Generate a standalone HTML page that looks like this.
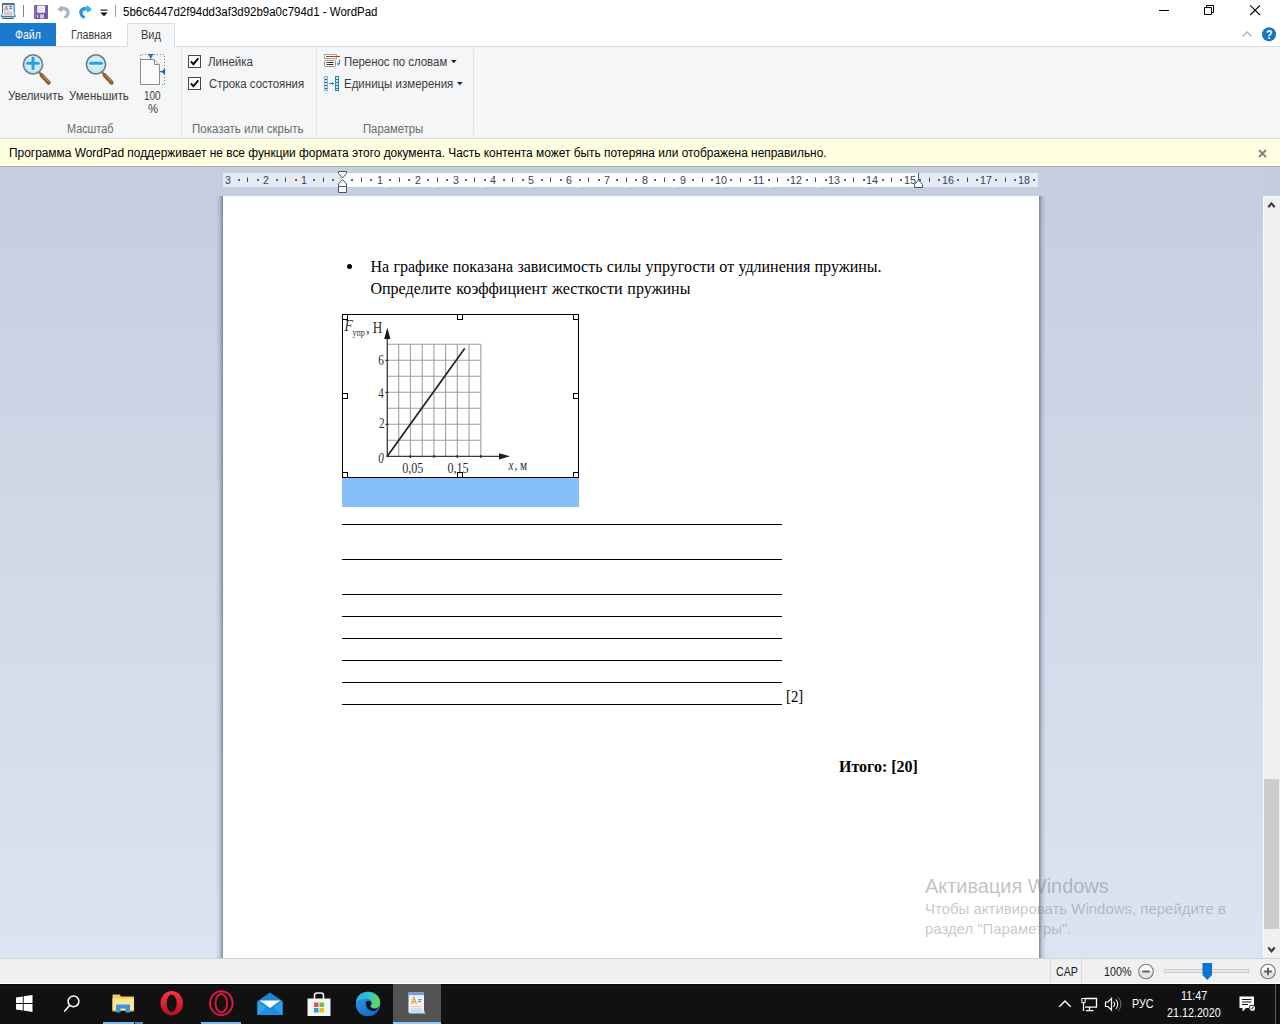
<!DOCTYPE html>
<html lang="ru">
<head>
<meta charset="utf-8">
<title>WordPad</title>
<style>
*{box-sizing:border-box;margin:0;padding:0}
html,body{width:1280px;height:1024px;overflow:hidden;background:#fff}
body{position:relative;font-family:"Liberation Sans",sans-serif;font-size:12px;color:#1e1e1e}
.abs{position:absolute}
svg{position:absolute;overflow:visible}
.t{position:absolute;white-space:nowrap;transform-origin:0 50%}
#titlebar{left:0;top:0;width:1280px;height:23px;background:#fff}
#tabrow{left:0;top:23px;width:1280px;height:24px;background:#fff;border-bottom:1px solid #dadbdc}
#filetab{left:0;top:23px;width:56px;height:23px;background:#1979ca}
#vidtab{left:127px;top:23px;width:48px;height:24px;background:#f5f6f7;border:1px solid #dadbdc;border-bottom:none}
#ribbon{left:0;top:47px;width:1280px;height:92px;background:#f5f6f7;border-bottom:1px solid #dadbd6}
.sep{position:absolute;top:49px;width:1px;height:86px;background:#e2e3e4}
.cb{position:absolute;left:188px;width:13px;height:13px;background:#fff;border:1px solid #45454c}
#info{left:0;top:139px;width:1280px;height:28px;background:#ffffe1;border-bottom:1px solid #a8aca8}
#work{left:0;top:167px;width:1263px;height:791px;background:linear-gradient(#c5cedf,#dbe5f1)}
#vscroll{left:1263px;top:196px;width:17px;height:762px;background:#f0f0f0}
#vscrolltop{left:1263px;top:167px;width:17px;height:29px;background:#c5cedf}
#thumb{left:1264px;top:779px;width:15px;height:150px;background:#cdcdcd}
#page{left:223px;top:196px;width:816px;height:762px;background:#fff}
#status{left:0;top:958px;width:1280px;height:26px;background:#f0f0f0;border-top:1px solid #d2d2d2;border-bottom:1px solid #fff}
#taskbar{left:0;top:984px;width:1280px;height:40px;background:#111;border-top:1px solid #070707}
.ul{position:absolute;left:342px;width:440px;height:1px;background:#000}
.hd{position:absolute;width:6px;height:6px;background:#fff;border:1px solid #000}
</style>
</head>
<body>
<div class="abs" id="titlebar"></div>
<div class="abs" id="tabrow"></div>
<div class="abs" id="filetab"></div>
<div class="abs" id="vidtab"></div>
<div class="abs" id="ribbon"></div>
<svg style="left:0;top:0" width="20" height="22" viewBox="0 0 20 22">
<path d="M2.500 3.600H14.200V13.500L15.300 16.300H1.300L2.500 13.500Z" fill="#dcebf8" stroke="#3f6f9f" stroke-width="1"/>
<path d="M2.500 4.100H14.200" stroke="#2f5f92" stroke-width="1.400"/>
<path d="M3.200 12.300H13.500L14.300 15.600H2.300Z" fill="#f6f9fc"/>
<path d="M4.600 10.800L6.300 5.900L8 10.800M5.200 9.200H7.400" stroke="#e39672" stroke-width="1.300" fill="none"/>
<path d="M9.400 6.400H12M9.400 8.400H12" stroke="#3f7fc4" stroke-width="1.100"/>
<path d="M4 12.900H12.500" stroke="#9aa4ae" stroke-width="0.900"/>
<path d="M3.800 14.300H12.800" stroke="#c9a9a9" stroke-width="0.900"/>
<path d="M1 16.800H15.400" stroke="#3f6f9f" stroke-width="1"/>
<path d="M2.200 18.400H13.800" stroke="#34495e" stroke-width="1"/>
</svg>
<div class="abs" style="left:23px;top:5px;width:1px;height:12px;background:#858585"></div>
<svg style="left:34px;top:5px" width="14" height="14" viewBox="0 0 14 14">
<rect x="0" y="0" width="14" height="14" rx="0.800" fill="#7a58ad"/>
<rect x="1" y="0.500" width="1" height="13" fill="#9273c2"/>
<rect x="3.200" y="0.700" width="7.900" height="7" fill="#f7f3fc"/>
<path d="M4.300 3H10M4.300 5.200H10" stroke="#d9cdea" stroke-width="0.900"/>
<rect x="2.800" y="9" width="8.600" height="5" fill="#5f4390"/>
<rect x="5.800" y="9.200" width="4.400" height="4.300" fill="#cfc6de"/>
<rect x="3.200" y="9.600" width="1.100" height="3.200" fill="#efe9f7"/>
</svg>
<svg style="left:57px;top:5px" width="14" height="14" viewBox="0 0 14 14">
<path d="M0.200 4.400L4.900 0.200V1.900C9.500 1.500 13 4 12.800 7.500C12.700 10.500 10.500 12.800 8.300 13.800L6.600 11.800C8.300 10.800 9.400 9.300 9.300 7.600C9.200 5.800 7.500 5.100 4.900 5.400V7.500Z" fill="#a7b4c9"/>
</svg>
<svg style="left:78px;top:5px" width="14" height="14" viewBox="0 0 14 14">
<path d="M13.800 4.400L9.100 0.200V1.900C4.500 1.500 1 4 1.200 7.500C1.300 10.500 3.500 12.800 5.700 13.800L7.400 11.800C5.700 10.800 4.600 9.300 4.700 7.600C4.800 5.800 6.500 5.100 9.100 5.400V7.500Z" fill="#2b96d4"/>
<path d="M13.800 4.400L9.100 0.200V1.900L7.500 2V5.500L9.100 5.400V7.500Z" fill="#38b7de"/>
</svg>
<svg style="left:100px;top:9px" width="8" height="8" viewBox="0 0 8 8">
<rect x="0.500" y="0.500" width="7" height="1.200" fill="#222"/>
<path d="M0.300 3.500h7.400l-3.700 3.800z" fill="#111"/>
</svg>
<div class="abs" style="left:115px;top:5px;width:1px;height:12px;background:#9a9a9a"></div>
<div class="t" style="left:123.0px;top:5.0px;font-size:12px;line-height:14px;height:14px;transform:scaleX(0.9567);color:#000;">5b6c6447d2f94dd3af3d92b9a0c794d1 - WordPad</div>
<svg style="left:1150px;top:0" width="130" height="23" viewBox="0 0 130 23">
<path d="M9 10.500h10" stroke="#000" stroke-width="1"/>
<path d="M54.500 7.500h7v7h-7zM56.500 7.500v-2h7v7h-2" stroke="#000" stroke-width="1" fill="none"/>
<path d="M100.200 5.300l9.800 9.700M110 5.300l-9.800 9.700" stroke="#000" stroke-width="1.100"/>
</svg>
<div class="t" style="left:15.0px;top:28.0px;font-size:12px;line-height:14px;height:14px;transform:scaleX(0.8745);color:#fff;">Файл</div>
<div class="t" style="left:70.8px;top:28.0px;font-size:12px;line-height:14px;height:14px;transform:scaleX(0.8911);color:#3c3c3c;">Главная</div>
<div class="t" style="left:141.3px;top:28.0px;font-size:12px;line-height:14px;height:14px;transform:scaleX(0.9212);color:#3c3c3c;">Вид</div>
<svg style="left:1240px;top:27px" width="40" height="16" viewBox="0 0 40 16">
<path d="M2.500 9.300l4.500-4.300 4.500 4.300" stroke="#b9b9b9" stroke-width="1.600" fill="none"/>
<circle cx="29" cy="7.300" r="7" fill="#1a74c4"/>
</svg>
<div class="t" style="left:1265.8px;top:28.0px;font-size:12px;line-height:14px;height:14px;transform:scaleX(0.8731);color:#fff;font-weight:700;">?</div>
<div class="sep" style="left:181px"></div>
<div class="sep" style="left:316px"></div>
<div class="sep" style="left:473px"></div>
<svg style="left:18.5px;top:52px" width="34" height="36" viewBox="18.5 52 34 36">
<defs><radialGradient id="lgA" cx="0.500" cy="0.450" r="0.600"><stop offset="0" stop-color="#e2f8ff"/><stop offset="1" stop-color="#b3e3f9"/></radialGradient></defs>
<path d="M38.1 71.600L41.5 75.500" stroke="#7c7468" stroke-width="2.200" stroke-linecap="round"/>
<path d="M41.1 75.200L48.1 82.700" stroke="#86582e" stroke-width="4" stroke-linecap="round"/>
<path d="M41.7 75L47.9 81.600" stroke="#b78450" stroke-width="1.400" stroke-linecap="round"/>
<circle cx="32.5" cy="64.400" r="9.600" fill="url(#lgA)" stroke="#747a82" stroke-width="1.600"/>
<path d="M27.2 63.200h10.600" stroke="#2d9fd8" stroke-width="3" stroke-linecap="round"/>
<path d="M32.5 57.900v10.600" stroke="#2d9fd8" stroke-width="3" stroke-linecap="round"/>
</svg>
<svg style="left:81.5px;top:52px" width="34" height="36" viewBox="81.5 52 34 36">
<defs><radialGradient id="lgB" cx="0.500" cy="0.450" r="0.600"><stop offset="0" stop-color="#e2f8ff"/><stop offset="1" stop-color="#b3e3f9"/></radialGradient></defs>
<path d="M101.1 71.600L104.5 75.500" stroke="#7c7468" stroke-width="2.200" stroke-linecap="round"/>
<path d="M104.1 75.200L111.1 82.700" stroke="#86582e" stroke-width="4" stroke-linecap="round"/>
<path d="M104.7 75L110.9 81.600" stroke="#b78450" stroke-width="1.400" stroke-linecap="round"/>
<circle cx="95.5" cy="64.400" r="9.600" fill="url(#lgB)" stroke="#747a82" stroke-width="1.600"/>
<path d="M90.2 63.200h10.600" stroke="#2d9fd8" stroke-width="3" stroke-linecap="round"/>
</svg>
<svg style="left:140px;top:54px" width="26" height="32" viewBox="140 54 26 32">
<path d="M140.500 59V54.500H164.500V84.500H160" stroke="#7a8088" stroke-width="1" stroke-dasharray="1 2" fill="none"/>
<path d="M140.500 59.500H154.500L159.500 64.500V84.500H140.500Z" fill="#fcfcfc" stroke="#868c93" stroke-width="1"/>
<path d="M154.500 59.500V64.500H159.500" fill="#ececec" stroke="#868c93" stroke-width="1"/>
<path d="M148 54.500H153.500M150.700 55V59" stroke="#2d6596" stroke-width="1.200" fill="none"/>
<path d="M148.300 55.300H153.100L150.700 58Z" fill="#2d6596"/>
<path d="M164.500 69V74.500M160 71.700H164.500" stroke="#2d6596" stroke-width="1.200" fill="none"/>
<path d="M164 69.300V74.100L161.300 71.700Z" fill="#2d6596"/>
</svg>
<div class="t" style="left:8.2px;top:89.0px;font-size:12px;line-height:14px;height:14px;transform:scaleX(0.9573);color:#3c3c3c;">Увеличить</div>
<div class="t" style="left:68.9px;top:89.0px;font-size:12px;line-height:14px;height:14px;transform:scaleX(0.9497);color:#3c3c3c;">Уменьшить</div>
<div class="t" style="left:143.7px;top:89.0px;font-size:12px;line-height:14px;height:14px;transform:scaleX(0.8291);color:#3c3c3c;">100</div>
<div class="t" style="left:147.5px;top:102.0px;font-size:12px;line-height:14px;height:14px;transform:scaleX(0.9372);color:#3c3c3c;">%</div>
<div class="t" style="left:66.8px;top:122.0px;font-size:12px;line-height:14px;height:14px;transform:scaleX(0.9038);color:#6a6a6a;">Масштаб</div>
<div class="cb" style="top:55px"></div>
<svg style="left:188px;top:55px" width="13" height="13" viewBox="0 0 13 13"><path d="M2.800 6.400l2.600 2.800 4.900-5.800" stroke="#111" stroke-width="2" fill="none"/></svg>
<div class="cb" style="top:77px"></div>
<svg style="left:188px;top:77px" width="13" height="13" viewBox="0 0 13 13"><path d="M2.800 6.400l2.600 2.800 4.900-5.800" stroke="#111" stroke-width="2" fill="none"/></svg>
<div class="t" style="left:208.3px;top:55.0px;font-size:12px;line-height:14px;height:14px;transform:scaleX(0.9622);color:#3c3c3c;">Линейка</div>
<div class="t" style="left:208.5px;top:77.0px;font-size:12px;line-height:14px;height:14px;transform:scaleX(0.9491);color:#3c3c3c;">Строка состояния</div>
<div class="t" style="left:191.5px;top:122.0px;font-size:12px;line-height:14px;height:14px;transform:scaleX(0.9572);color:#6a6a6a;">Показать или скрыть</div>
<svg style="left:324px;top:54px" width="17" height="14" viewBox="0 0 17 14">
<rect x="0.500" y="0.500" width="12" height="4" fill="#fff" stroke="#b0a090" stroke-width="1"/>
<path d="M2 2.500h14" stroke="#c0392b" stroke-width="1"/>
<rect x="0.500" y="6.500" width="11" height="6" rx="1" fill="#fff" stroke="#a09080" stroke-width="1"/>
<path d="M2.500 8.500h7M2.500 10.500h7" stroke="#333" stroke-width="1"/>
<path d="M15.500 5.500v4.500h-2M14.800 8.500l-1.500 1.500 1.500 1.500" stroke="#2f7fc0" stroke-width="1" fill="none"/>
</svg>
<svg style="left:324px;top:76px" width="16" height="15" viewBox="0 0 16 15">
<rect x="0.500" y="0.500" width="3" height="14" fill="#dbe9f7" stroke="#3b6fb5" stroke-width="1" stroke-dasharray="1 1"/>
<path d="M1 3.500h2M1 6.500h2M1 9.500h2M1 12.500h2" stroke="#2b4f8a" stroke-width="1"/>
<rect x="11.500" y="0.500" width="3" height="14" fill="#cfe6f3" stroke="#2f86b5" stroke-width="1"/>
<path d="M12 3.500h2M12 6.500h2M12 9.500h2M12 12.500h2" stroke="#2b6f95" stroke-width="1"/>
<path d="M5 7.500h4.500M8 6l1.500 1.500-1.500 1.500" stroke="#2f7fc0" stroke-width="1" fill="none"/>
</svg>
<div class="t" style="left:343.5px;top:55.0px;font-size:12px;line-height:14px;height:14px;transform:scaleX(0.9489);color:#3c3c3c;">Перенос по словам</div>
<div class="t" style="left:343.5px;top:77.0px;font-size:12px;line-height:14px;height:14px;transform:scaleX(0.9573);color:#3c3c3c;">Единицы измерения</div>
<svg style="left:451px;top:60px" width="6" height="4" viewBox="0 0 6 4"><path d="M0 0h5.600l-2.800 3.200z" fill="#222"/></svg>
<svg style="left:457px;top:82px" width="6" height="4" viewBox="0 0 6 4"><path d="M0 0h5.600l-2.800 3.200z" fill="#222"/></svg>
<div class="t" style="left:363.4px;top:122.0px;font-size:12px;line-height:14px;height:14px;transform:scaleX(0.9411);color:#6a6a6a;">Параметры</div>
<div class="abs" id="info"></div>
<div class="t" style="left:9.4px;top:146.0px;font-size:12px;line-height:14px;height:14px;transform:scaleX(0.9918);color:#000;">Программа WordPad поддерживает не все функции формата этого документа. Часть контента может быть потеряна или отображена неправильно.</div>
<svg style="left:1258px;top:149px" width="9" height="9" viewBox="0 0 9 9"><path d="M1 1l7 7M8 1l-7 7" stroke="#808080" stroke-width="1.800"/></svg>
<div class="abs" id="work"></div>
<div class="abs" id="vscrolltop"></div>
<div class="abs" id="vscroll"></div>
<div class="abs" id="thumb"></div>
<div class="abs" style="left:1263px;top:196px;width:17px;height:1px;background:#f8fafc"></div><div class="abs" style="left:1263px;top:196px;width:1px;height:762px;background:#f8fafc"></div>
<svg style="left:1263px;top:196px" width="17" height="17" viewBox="1263 196 17 17"><path d="M1268.300 207.200L1271.500 203.400L1274.700 207.200" stroke="#3c3c3c" stroke-width="2.100" fill="none"/></svg>
<svg style="left:1263px;top:941px" width="17" height="17" viewBox="1263 941 17 17"><path d="M1268.300 947.500L1271.500 951.300L1274.700 947.500" stroke="#3c3c3c" stroke-width="2.100" fill="none"/></svg>
<div class="abs" style="left:216px;top:196px;width:7px;height:762px;background:linear-gradient(90deg,rgba(110,122,145,0),rgba(110,122,145,0.250) 55%,rgba(96,108,132,0.750))"></div>
<div class="abs" style="left:1039px;top:196px;width:7px;height:762px;background:linear-gradient(270deg,rgba(110,122,145,0),rgba(110,122,145,0.250) 55%,rgba(96,108,132,0.750))"></div>
<div class="abs" id="page"></div>
<div class="abs" style="left:223px;top:173px;width:815px;height:14px;background:#e6eaf3"></div>
<div class="abs" style="left:342px;top:173px;width:576px;height:14px;background:#fdfdfe"></div>
<svg style="left:0;top:166px" width="1263" height="30" viewBox="0 166 1263 30">
<path d="M247.5 177.500v4.500M285.5 177.500v4.500M323.5 177.500v4.500M361.5 177.500v4.500M399.5 177.500v4.500M437.5 177.500v4.500M474.5 177.500v4.500M512.5 177.500v4.500M550.5 177.500v4.500M588.5 177.500v4.500M626.5 177.500v4.500M664.5 177.500v4.500M702.5 177.500v4.500M740.5 177.500v4.500M777.5 177.500v4.500M815.5 177.500v4.500M853.5 177.500v4.500M891.5 177.500v4.500M929.5 177.500v4.500M967.5 177.500v4.500M1005.5 177.500v4.500" stroke="#3f4c61" stroke-width="1"/>
<path d="M238.2 179.100h1.700v1.800h-1.700zM257.2 179.100h1.700v1.800h-1.700zM276.2 179.100h1.700v1.800h-1.700zM295.2 179.100h1.700v1.800h-1.700zM313.2 179.100h1.700v1.800h-1.700zM332.2 179.100h1.700v1.800h-1.700zM351.2 179.100h1.700v1.800h-1.700zM370.2 179.100h1.700v1.800h-1.700zM389.2 179.100h1.700v1.800h-1.700zM408.2 179.100h1.700v1.800h-1.700zM427.2 179.100h1.700v1.800h-1.700zM446.2 179.100h1.700v1.800h-1.700zM465.2 179.100h1.700v1.800h-1.700zM484.2 179.100h1.700v1.800h-1.700zM503.2 179.100h1.700v1.800h-1.700zM522.2 179.100h1.700v1.800h-1.700zM541.2 179.100h1.700v1.800h-1.700zM560.2 179.100h1.700v1.800h-1.700zM579.2 179.100h1.700v1.800h-1.700zM598.2 179.100h1.700v1.800h-1.700zM616.2 179.100h1.700v1.800h-1.700zM635.2 179.100h1.700v1.800h-1.700zM654.2 179.100h1.700v1.800h-1.700zM673.2 179.100h1.700v1.800h-1.700zM692.2 179.100h1.700v1.800h-1.700zM711.2 179.100h1.700v1.800h-1.700zM730.2 179.100h1.700v1.800h-1.700zM749.2 179.100h1.700v1.800h-1.700zM768.2 179.100h1.700v1.800h-1.700zM787.2 179.100h1.700v1.800h-1.700zM806.2 179.100h1.700v1.800h-1.700zM825.2 179.100h1.700v1.800h-1.700zM844.2 179.100h1.700v1.800h-1.700zM863.2 179.100h1.700v1.800h-1.700zM882.2 179.100h1.700v1.800h-1.700zM900.2 179.100h1.700v1.800h-1.700zM919.2 179.100h1.700v1.800h-1.700zM938.2 179.100h1.700v1.800h-1.700zM957.2 179.100h1.700v1.800h-1.700zM976.2 179.100h1.700v1.800h-1.700zM995.2 179.100h1.700v1.800h-1.700zM1014.2 179.100h1.700v1.800h-1.700zM1033.2 179.100h1.700v1.800h-1.700z" fill="#3f4c61"/>
<path d="M390.5 188v2M438.5 188v2M486.5 188v2M534.5 188v2M582.5 188v2M630.5 188v2M678.5 188v2M726.5 188v2M774.5 188v2M822.5 188v2M870.5 188v2" stroke="#a4afc4" stroke-width="1"/>
<path d="M338.500 171.500h8v2l-4 4.500-4-4.500z" fill="#fbfcfe" stroke="#46546b" stroke-width="1"/>
<path d="M338.500 186.500v-2.500l4-4.500 4 4.500v2.500z" fill="#fbfcfe" stroke="#46546b" stroke-width="1"/>
<path d="M338.500 186.500h8v6h-8z" fill="#fbfcfe" stroke="#46546b" stroke-width="1"/>
<path d="M918.500 173v7" stroke="#46546b" stroke-width="1"/>
<path d="M914.500 187.500v-3l4-4.500 4 4.500v3z" fill="#fbfcfe" stroke="#46546b" stroke-width="1"/>
</svg>
<div class="t" style="left:225.3px;top:173.5px;font-size:11.5px;line-height:12px;height:12px;transform:scaleX(0.9300);color:#36445a;">3</div>
<div class="t" style="left:263.2px;top:173.5px;font-size:11.5px;line-height:12px;height:12px;transform:scaleX(0.9300);color:#36445a;">2</div>
<div class="t" style="left:301.1px;top:173.5px;font-size:11.5px;line-height:12px;height:12px;transform:scaleX(0.9300);color:#36445a;">1</div>
<div class="t" style="left:376.8px;top:173.5px;font-size:11.5px;line-height:12px;height:12px;transform:scaleX(0.9300);color:#36445a;">1</div>
<div class="t" style="left:414.7px;top:173.5px;font-size:11.5px;line-height:12px;height:12px;transform:scaleX(0.9300);color:#36445a;">2</div>
<div class="t" style="left:452.5px;top:173.5px;font-size:11.5px;line-height:12px;height:12px;transform:scaleX(0.9300);color:#36445a;">3</div>
<div class="t" style="left:490.4px;top:173.5px;font-size:11.5px;line-height:12px;height:12px;transform:scaleX(0.9300);color:#36445a;">4</div>
<div class="t" style="left:528.3px;top:173.5px;font-size:11.5px;line-height:12px;height:12px;transform:scaleX(0.9300);color:#36445a;">5</div>
<div class="t" style="left:566.1px;top:173.5px;font-size:11.5px;line-height:12px;height:12px;transform:scaleX(0.9300);color:#36445a;">6</div>
<div class="t" style="left:604.0px;top:173.5px;font-size:11.5px;line-height:12px;height:12px;transform:scaleX(0.9300);color:#36445a;">7</div>
<div class="t" style="left:641.9px;top:173.5px;font-size:11.5px;line-height:12px;height:12px;transform:scaleX(0.9300);color:#36445a;">8</div>
<div class="t" style="left:679.8px;top:173.5px;font-size:11.5px;line-height:12px;height:12px;transform:scaleX(0.9300);color:#36445a;">9</div>
<div class="t" style="left:714.7px;top:173.5px;font-size:11.5px;line-height:12px;height:12px;transform:scaleX(0.9300);color:#36445a;">10</div>
<div class="t" style="left:752.9px;top:173.5px;font-size:11.5px;line-height:12px;height:12px;transform:scaleX(0.9300);color:#36445a;">11</div>
<div class="t" style="left:790.4px;top:173.5px;font-size:11.5px;line-height:12px;height:12px;transform:scaleX(0.9300);color:#36445a;">12</div>
<div class="t" style="left:828.3px;top:173.5px;font-size:11.5px;line-height:12px;height:12px;transform:scaleX(0.9300);color:#36445a;">13</div>
<div class="t" style="left:866.1px;top:173.5px;font-size:11.5px;line-height:12px;height:12px;transform:scaleX(0.9300);color:#36445a;">14</div>
<div class="t" style="left:904.0px;top:173.5px;font-size:11.5px;line-height:12px;height:12px;transform:scaleX(0.9300);color:#36445a;">15</div>
<div class="t" style="left:941.9px;top:173.5px;font-size:11.5px;line-height:12px;height:12px;transform:scaleX(0.9300);color:#36445a;">16</div>
<div class="t" style="left:979.7px;top:173.5px;font-size:11.5px;line-height:12px;height:12px;transform:scaleX(0.9300);color:#36445a;">17</div>
<div class="t" style="left:1017.6px;top:173.5px;font-size:11.5px;line-height:12px;height:12px;transform:scaleX(0.9300);color:#36445a;">18</div>
<div class="abs" style="left:347px;top:264px;width:5px;height:5px;border-radius:50%;background:#000"></div>
<div class="t" style="left:370.5px;top:258.0px;font-size:16px;line-height:17px;height:17px;word-spacing:0.291px;color:#000;font-family:'Liberation Serif',serif;">На графике показана зависимость силы упругости от удлинения пружины.</div>
<div class="t" style="left:370.5px;top:280.0px;font-size:16px;line-height:17px;height:17px;word-spacing:0.857px;color:#000;font-family:'Liberation Serif',serif;">Определите коэффициент жесткости пружины</div>
<div class="abs" style="left:342px;top:314px;width:237px;height:164px;border:1px solid #000;background:#fff"></div>
<div class="abs" style="left:342px;top:478px;width:237px;height:29px;background:#86bffa"></div>
<svg style="left:342px;top:314px" width="237" height="164" viewBox="342 314 237 164">
<path d="M398.7 344V456.300M410.4 344V456.300M422.2 344V456.300M433.9 344V456.300M445.6 344V456.300M457.3 344V456.300M469.0 344V456.300M480.8 344V456.300M387 344.3H480.800M387 360.3H480.800M387 376.3H480.800M387 392.3H480.800M387 408.3H480.800M387 424.3H480.800M387 440.3H480.800" stroke="#8f8f8f" stroke-width="1.100" fill="none" opacity="0.850"/>
<path d="M387.300 457V337M387 456.300H501" stroke="#3a3a3a" stroke-width="1.300" fill="none"/>
<path d="M387.300 327.500l3.100 11.500h-6.200zM510 456.300l-11 3.100v-6.200z" fill="#1a1a1a"/>
<path d="M385.500 360.3h3M385.500 392.3h3M385.500 424.3h3M410.4 455v3M433.9 455v3M457.3 455v3M480.8 455v3" stroke="#2a2a2a" stroke-width="1.300"/>
<path d="M387.300 456.300L464.300 349" stroke="#222" stroke-width="1.700" stroke-linecap="round"/>
<text transform="translate(381 365.3) scale(0.8 1)" font-family="Liberation Serif, serif" font-size="14" text-anchor="middle" fill="#2b2b33">6</text>
<text transform="translate(381 398) scale(0.8 1)" font-family="Liberation Serif, serif" font-size="14" text-anchor="middle" fill="#2b2b33">4</text>
<text transform="translate(381.8 428.3) scale(0.8 1)" font-family="Liberation Serif, serif" font-size="14" text-anchor="middle" fill="#2b2b33">2</text>
<text transform="translate(381 463) scale(0.8 1)" font-family="Liberation Serif, serif" font-size="14" font-style="italic" text-anchor="middle" fill="#2b2b33">0</text>
<text transform="translate(412.8 473) scale(0.81 1)" font-family="Liberation Serif, serif" font-size="15" text-anchor="middle" fill="#2b2b33">0,05</text>
<text transform="translate(458 473) scale(0.81 1)" font-family="Liberation Serif, serif" font-size="15" text-anchor="middle" fill="#2b2b33">0,15</text>
<text transform="translate(508.4 469.5) scale(0.8 1)" font-family="Liberation Serif, serif" font-size="14" font-style="italic" text-anchor="start" fill="#2b2b33">x</text>
<text transform="translate(514.5 469.5) scale(0.8 1)" font-family="Liberation Serif, serif" font-size="14" text-anchor="start" fill="#2b2b33">, м</text>
<text transform="translate(344.5 331) scale(0.85 1)" font-family="Liberation Serif, serif" font-size="16" font-style="italic" text-anchor="start" fill="#2b2b33">F</text>
<text transform="translate(352.5 336) scale(0.8 1)" font-family="Liberation Serif, serif" font-size="10" text-anchor="start" fill="#2b2b33">упр</text>
<text transform="translate(366.2 333) scale(0.82 1)" font-family="Liberation Serif, serif" font-size="16" text-anchor="start" fill="#2b2b33">, Н</text>
</svg>
<div class="hd" style="left:342px;top:314px"></div>
<div class="hd" style="left:457px;top:314px"></div>
<div class="hd" style="left:573px;top:314px"></div>
<div class="hd" style="left:342px;top:393px"></div>
<div class="hd" style="left:573px;top:393px"></div>
<div class="hd" style="left:342px;top:472px"></div>
<div class="hd" style="left:457px;top:472px"></div>
<div class="hd" style="left:573px;top:472px"></div>
<div class="ul" style="top:524px"></div>
<div class="ul" style="top:559px"></div>
<div class="ul" style="top:594px"></div>
<div class="ul" style="top:616px"></div>
<div class="ul" style="top:638px"></div>
<div class="ul" style="top:660px"></div>
<div class="ul" style="top:682px"></div>
<div class="ul" style="top:704px"></div>
<div class="t" style="left:786.4px;top:688.0px;font-size:16px;line-height:17px;height:17px;transform:scaleX(0.9272);color:#000;font-family:'Liberation Serif',serif;">[2]</div>
<div class="t" style="left:838.8px;top:758.0px;font-size:16px;line-height:17px;height:17px;transform:scaleX(0.9981);color:#000;font-family:'Liberation Serif',serif;font-weight:700;">Итого: [20]</div>
<div class="t" style="left:925.3px;top:875.0px;font-size:20px;line-height:22px;height:22px;transform:scaleX(0.9966);color:rgba(120,120,120,0.450);">Активация Windows</div>
<div class="t" style="left:925.3px;top:900.0px;font-size:15px;line-height:17px;height:17px;transform:scaleX(0.9979);color:rgba(120,120,120,0.420);">Чтобы активировать Windows, перейдите в</div>
<div class="t" style="left:925.3px;top:920.0px;font-size:15px;line-height:17px;height:17px;transform:scaleX(0.9928);color:rgba(120,120,120,0.420);">раздел "Параметры".</div>
<div class="abs" id="status"></div>
<div class="abs" style="left:1050px;top:959px;width:1px;height:24px;background:#d9d9d9"></div>
<div class="abs" style="left:1081px;top:959px;width:1px;height:24px;background:#d9d9d9"></div>
<div class="t" style="left:1055.6px;top:965.0px;font-size:12px;line-height:14px;height:14px;transform:scaleX(0.8875);color:#1a1a1a;">CAP</div>
<div class="t" style="left:1103.8px;top:965.0px;font-size:12px;line-height:14px;height:14px;transform:scaleX(0.8993);color:#1a1a1a;">100%</div>
<svg style="left:1136px;top:961px" width="144" height="22" viewBox="1136 961 144 22">
<defs><linearGradient id="zbg" x1="0" y1="0" x2="0" y2="1"><stop offset="0.450" stop-color="#f8f8f8"/><stop offset="0.550" stop-color="#e4e4e4"/></linearGradient></defs>
<circle cx="1146" cy="971.500" r="7.300" fill="url(#zbg)" stroke="#7a7a7a" stroke-width="1.100"/>
<path d="M1142.200 971.500h7.600" stroke="#5a5a5a" stroke-width="1.800"/>
<rect x="1164.500" y="969.500" width="84" height="3" fill="#e7e7e7" stroke="#cdcdcd" stroke-width="1"/>
<path d="M1202.500 963h9.500v12l-4.750 5-4.750-5z" fill="#0a74d4"/>
<circle cx="1268" cy="971.500" r="7.300" fill="url(#zbg)" stroke="#7a7a7a" stroke-width="1.100"/>
<path d="M1264.200 971.500h7.600M1268 967.700v7.600" stroke="#5a5a5a" stroke-width="1.800"/>
</svg>
<div class="abs" id="taskbar"></div>
<div class="abs" style="left:393px;top:984px;width:48px;height:40px;background:#535353"></div>
<div class="abs" style="left:393px;top:1022px;width:48px;height:2px;background:#92c6ef"></div>
<div class="abs" style="left:103px;top:1022px;width:31px;height:2px;background:#7db8ea"></div>
<div class="abs" style="left:135px;top:1022px;width:8px;height:2px;background:#5d8fb8"></div>
<div class="abs" style="left:201px;top:1022px;width:40px;height:2px;background:#7db8ea"></div>
<svg style="left:16px;top:995px" width="17" height="17" viewBox="0 0 17 17">
<path d="M0 2.400l6.800-0.950v6.550h-6.800zM7.700 1.300l8.800-1.300v8h-8.800zM0 8.900h6.800v6.550l-6.800-0.950zM7.700 8.900h8.800v8l-8.800-1.300z" fill="#fff"/>
</svg>
<svg style="left:62px;top:993px" width="20" height="20" viewBox="62 993 20 20">
<circle cx="73.500" cy="1001.300" r="5.400" fill="none" stroke="#fff" stroke-width="1.500"/>
<path d="M69.700 1005.300l-5.400 6.200" stroke="#fff" stroke-width="1.600"/>
</svg>
<svg style="left:112px;top:994px" width="22" height="19" viewBox="0 0 22 19">
<path d="M0.500 1.500c0-0.600 0.400-1 1-1h6l1.500 2h12c0.600 0 1 0.400 1 1v13h-21.500z" fill="#f3c955"/>
<path d="M0.500 4.500h21.500v12h-21.500z" fill="#fbe59a"/>
<path d="M4 18.500v-7c0-0.600 0.400-1 1-1h12c0.600 0 1 0.400 1 1v7h-4.500v-4h-5v4z" fill="#3b97dd"/>
<path d="M0.500 16h4v1.500h-4zM17.500 16h4.500v1.500h-4.500z" fill="#e9b93b"/>
</svg>
<svg style="left:158px;top:990px" width="28" height="28" viewBox="0 0 28 28">
<defs><linearGradient id="opg" x1="0" y1="0" x2="0" y2="1"><stop offset="0" stop-color="#ff3347"/><stop offset="1" stop-color="#b5101f"/></linearGradient></defs>
<ellipse cx="13.700" cy="13.200" rx="11.200" ry="12.200" fill="url(#opg)"/>
<ellipse cx="13.700" cy="13.200" rx="5" ry="8.600" fill="#101010"/>
</svg>
<svg style="left:207px;top:990px" width="28" height="28" viewBox="0 0 28 28">
<ellipse cx="14.300" cy="13.200" rx="11.300" ry="12" fill="none" stroke="#e0193c" stroke-width="1.900"/>
<ellipse cx="14.300" cy="13.200" rx="5.800" ry="9.200" fill="none" stroke="#e0193c" stroke-width="1.900"/>
</svg>
<svg style="left:257px;top:992px" width="26" height="24" viewBox="0 0 26 24">
<path d="M0.500 9l12.500-8.500 12.500 8.500v14h-25z" fill="#1c86d6"/>
<path d="M2.500 8.500h21l-10.500 7.500z" fill="#fff"/>
<path d="M0.500 9l12.500 9 12.500-9v14h-25z" fill="#2fa2ee"/>
<path d="M0.500 23l9.500-8 3 2.200 3-2.200 9.500 8z" fill="#1f8fe0"/>
</svg>
<svg style="left:307px;top:992px" width="24" height="25" viewBox="0 0 24 25">
<path d="M7.500 7v-3.500c0-1.500 1-2.500 2.500-2.500h4c1.500 0 2.500 1 2.500 2.500v3.500" fill="none" stroke="#f2f2f2" stroke-width="1.600"/>
<path d="M0.500 6.500h23v17.500h-23z" fill="#f4f4f4"/>
<rect x="7" y="10.500" width="4.500" height="4.500" fill="#e2574c"/><rect x="12.500" y="10.500" width="4.500" height="4.500" fill="#7cbb42"/>
<rect x="7" y="16" width="4.500" height="4.500" fill="#2e9be6"/><rect x="12.500" y="16" width="4.500" height="4.500" fill="#f5b921"/>
</svg>
<svg style="left:355px;top:991px" width="26" height="26" viewBox="0 0 26 26">
<defs><linearGradient id="edg" x1="0" y1="0" x2="1" y2="0.300"><stop offset="0" stop-color="#2aa5ea"/><stop offset="0.500" stop-color="#2cc3d0"/><stop offset="1" stop-color="#62d75c"/></linearGradient>
<linearGradient id="edb" x1="0" y1="0" x2="1" y2="1"><stop offset="0" stop-color="#2b9de8"/><stop offset="1" stop-color="#1560c0"/></linearGradient></defs>
<circle cx="13" cy="13" r="12.200" fill="url(#edb)"/>
<path d="M1 10.500C2 4.500 7 0.800 13 0.800C20 0.800 25.200 5.800 25.200 11.500C25.200 15 22.500 17.200 19.500 17.200C17.500 17.200 16 16.500 16 15.200C16 14.200 17 13.800 17 12C17 9.500 14.500 7.500 11.300 7.500C7 7.500 3 9.500 1 10.500Z" fill="url(#edg)"/>
<path d="M10.800 12.600C10.800 10.800 12.200 9.800 13.500 9.800C15 9.800 16.200 10.800 16.200 12.300C16.200 13.800 15.300 14.300 15.300 15.300C15.300 16.700 17 17.800 19.500 17.800C21 17.800 22.500 17.300 23.600 16.300C22.500 18.800 20.500 20 18 20C14 20 10.800 16.500 10.800 12.600Z" fill="#101418"/>
</svg>
<svg style="left:407px;top:992px" width="20" height="22" viewBox="0 0 20 22">
<defs><linearGradient id="wpg" x1="0" y1="0" x2="0" y2="1"><stop offset="0" stop-color="#e3eefa"/><stop offset="0.700" stop-color="#f4f8fc"/><stop offset="1" stop-color="#c9dcf0"/></linearGradient></defs>
<path d="M1.500 0.500H17V17.500C17 19.500 18 20.800 18.700 21.500H2.500C1.500 20.500 1 19 1.500 17.500Z" fill="url(#wpg)"/>
<rect x="1.500" y="0.500" width="15.500" height="2.600" fill="#6fa3d8"/>
<path d="M4.300 12.200L6.900 5.600L9.500 12.200M5.200 10H8.600" stroke="#eea05a" stroke-width="1.500" fill="none"/>
<path d="M11.200 7.600H14.500M11.200 9.600H14" stroke="#5b93d3" stroke-width="1.100"/>
<path d="M3.500 14.700H14.500" stroke="#e7b98f" stroke-width="1"/>
<path d="M3.500 17H14.800M3.800 19H15.200" stroke="#b9cfe6" stroke-width="1"/>
</svg>
<svg style="left:1056px;top:994px" width="70" height="20" viewBox="1056 994 70 20">
<path d="M1059.300 1006.800l5.700-5.700 5.700 5.700" fill="none" stroke="#fff" stroke-width="1.400"/>
<path d="M1085 998.500h11.500v8.700h-11.500M1089.500 1007.200v3.300M1086 1010.600h7.500" fill="none" stroke="#fff" stroke-width="1.300"/>
<path d="M1081.800 998.500h3.400v4.200h-3.400z" fill="#111" stroke="#fff" stroke-width="1"/>
<path d="M1083.500 1002.700v8.300" stroke="#fff" stroke-width="1.200"/>
<path d="M1105.500 1002h2.500l3.500-3.500v11.500l-3.500-3.500h-2.500z" fill="none" stroke="#fff" stroke-width="1.200"/>
<path d="M1113.500 1001.700c1.300 1.500 1.300 3.600 0 5.100M1115.800 999.500c2.500 2.700 2.500 6.800 0 9.500" fill="none" stroke="#fff" stroke-width="1.100"/>
<path d="M1118.200 997.500c3.500 3.800 3.500 9.700 0 13.500" fill="none" stroke="#777" stroke-width="1"/>
</svg>
<div class="t" style="left:1132.3px;top:996.8px;font-size:12px;line-height:14px;height:14px;transform:scaleX(0.8989);color:#fff;">РУС</div>
<div class="t" style="left:1180.7px;top:988.5px;font-size:12px;line-height:14px;height:14px;transform:scaleX(0.9026);color:#fff;">11:47</div>
<div class="t" style="left:1167.2px;top:1006.0px;font-size:12px;line-height:14px;height:14px;transform:scaleX(0.8958);color:#fff;">21.12.2020</div>
<svg style="left:1239px;top:996px" width="17" height="18" viewBox="0 0 17 18">
<path d="M0.500 0.500h14.500v11.500h-8l-3.500 3.500v-3.500h-3z" fill="#fff"/>
<path d="M3 3.500h9.500M3 6h9.500M3 8.500h6" stroke="#101010" stroke-width="1.100"/>
<circle cx="13.300" cy="12.300" r="3.600" fill="#101010"/>
<circle cx="13.300" cy="12.300" r="2.700" fill="#e8e8e8"/>
<path d="M12 13.500l2.500-2.500" stroke="#101010" stroke-width="1"/>
</svg>
<div class="abs" style="left:1275px;top:984px;width:1px;height:40px;background:#5a5a5a"></div>
</body>
</html>
